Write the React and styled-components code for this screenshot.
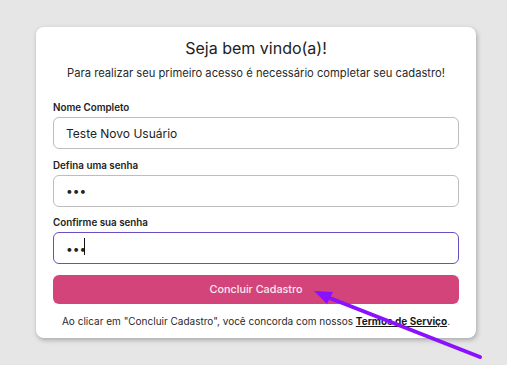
import React from "react";
import styled, { createGlobalStyle } from "styled-components";

const Global = createGlobalStyle`
  html, body { margin: 0; padding: 0; background: #e6e6e6; }
  body { font-family: Inter, "Noto Sans", sans-serif; color: #222; }
  * { box-sizing: border-box; }
`;

const Page = styled.div`
  position: relative;
  width: 507px;
  height: 365px;
  padding: 27px 0 0 36px;
  overflow: hidden;
`;

const Card = styled.div`
  width: 440px;
  background: #fff;
  border-radius: 8px;
  box-shadow: 1px 2px 5px rgba(0, 0, 0, 0.28);
  padding: 11px 17px 10px 17px;
  display: flex;
  flex-direction: column;
`;

const Title = styled.h1`
  margin: 0;
  font-size: 16px;
  line-height: 21px;
  font-weight: 400;
  text-align: center;
  color: #222;
`;

const Subtitle = styled.p`
  margin: 7px 0 21px;
  font-size: 11.2px;
  line-height: 14px;
  text-align: center;
  color: #2a2a2a;
`;

const Field = styled.div`
  display: flex;
  flex-direction: column;
  gap: 3px;
  margin-bottom: ${(p) => (p.$last ? "11px" : "9.5px")};
`;

const Label = styled.label`
  font-size: 9.8px;
  line-height: 13px;
  font-weight: 600;
  color: #222;
`;

const InputWrap = styled.div`
  position: relative;
`;

const Input = styled.input`
  width: 100%;
  height: 32px;
  border: 1px solid ${(p) => (p.$focused ? "#6b4fc0" : "#bdbdbd")};
  border-radius: 6px;
  padding: 0 12px;
  font-family: Inter, "Noto Sans", sans-serif;
  font-size: 12px;
  color: #222;
  background: #fff;
  outline: none;
`;

const Caret = styled.span`
  position: absolute;
  left: 31px;
  top: 6px;
  width: 1px;
  height: 17px;
  background: #111;
`;

const Button = styled.button`
  height: 29px;
  border: none;
  border-radius: 6px;
  background: #d3447a;
  color: #fbe9f0;
  font-family: Inter, "Noto Sans", sans-serif;
  font-size: 10.8px;
  font-weight: 500;
  cursor: pointer;
`;

const Footer = styled.p`
  margin: 10px 0 0;
  font-size: 10px;
  line-height: 14px;
  text-align: center;
  color: #2a2a2a;
  white-space: nowrap;
`;

const Link = styled.a`
  color: #1a1a1a;
  font-weight: 700;
  text-decoration: underline;
`;

const Arrow = styled.svg`
  position: absolute;
  left: 0;
  top: 0;
  pointer-events: none;
`;

export default function App() {
  return (
    <Page>
      <Global />
      <Card>
        <Title>Seja bem vindo(a)!</Title>
        <Subtitle>
          Para realizar seu primeiro acesso é necessário completar seu cadastro!
        </Subtitle>
        <Field>
          <Label>Nome Completo</Label>
          <Input type="text" defaultValue="Teste Novo Usuário" />
        </Field>
        <Field>
          <Label>Defina uma senha</Label>
          <Input type="password" defaultValue="abc" />
        </Field>
        <Field $last>
          <Label>Confirme sua senha</Label>
          <InputWrap>
            <Input type="password" defaultValue="abc" $focused />
            <Caret />
          </InputWrap>
        </Field>
        <Button>Concluir Cadastro</Button>
        <Footer>
          Ao clicar em "Concluir Cadastro", você concorda com nossos{" "}
          <Link>Termos de Serviço</Link>.
        </Footer>
      </Card>
      <Arrow width="507" height="365" viewBox="0 0 507 365">
        <line x1="480" y1="357" x2="322" y2="295" stroke="#8a10ff" strokeWidth="4" strokeLinecap="round" />
        <polygon points="314,291 333,292 327,304" fill="#8a10ff" />
      </Arrow>
    </Page>
  );
}
